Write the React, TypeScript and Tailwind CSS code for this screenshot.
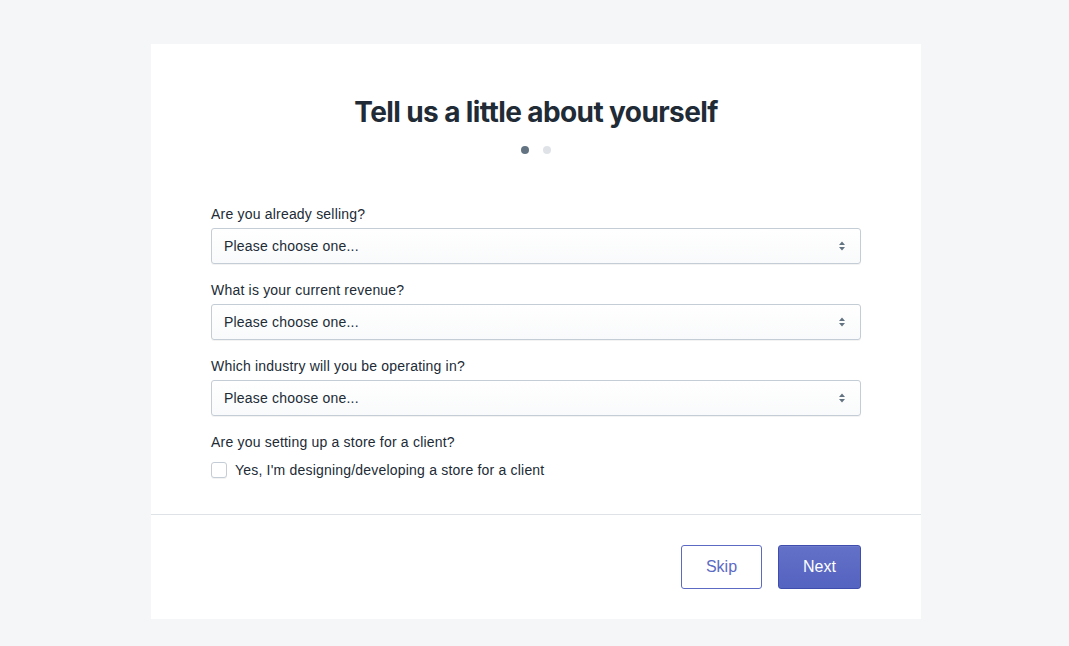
import React, { useState } from 'react';

const questions = [
  'Are you already selling?',
  'What is your current revenue?',
  'Which industry will you be operating in?',
];

const SelectArrows = () => (
  <svg width="8" height="12" viewBox="0 0 8 12" className="text-[#637381]">
    <path d="M4 1.5 L7 5 H1 Z" fill="currentColor" />
    <path d="M4 10.5 L7 7 H1 Z" fill="currentColor" />
  </svg>
);

export default function App() {
  const [client, setClient] = useState(false);

  return (
    <div className="min-h-screen bg-[#f4f6f8] pt-[44px] pb-[28px] pl-[3px] font-['Liberation_Sans',Arial,sans-serif] text-[#212b36]">
      <div className="mx-auto w-[770px] bg-white">
        {/* Body */}
        <div className="px-[60px] pt-[52px] pb-[34px]">
          <h1 className="text-center text-[28px] leading-[32px] font-bold tracking-[-0.6px] font-['Inter',sans-serif]">
            Tell us a little about yourself
          </h1>
          <div className="mt-[18px] flex justify-center gap-[14px]">
            <span className="h-2 w-2 rounded-full bg-[#637381]"></span>
            <span className="h-2 w-2 rounded-full bg-[#dfe3e8]"></span>
          </div>

          <div className="mt-[50px] tracking-[0.2px]">
            {questions.map((q) => (
              <div key={q} className="mb-4">
                <label className="block text-sm leading-5">{q}</label>
                <div className="mt-1 flex h-9 items-center justify-between rounded-[3px] border border-[#c4cdd5] bg-gradient-to-b from-white to-[#f9fafb] pl-3 pr-[14px] text-sm shadow-[0_1px_0_0_rgba(22,29,37,0.05)]">
                  <span>Please choose one...</span>
                  <SelectArrows />
                </div>
              </div>
            ))}

            <label className="block text-sm leading-5">Are you setting up a store for a client?</label>
            <label className="mt-2 flex items-center gap-2 text-sm leading-5 cursor-pointer">
              <span
                onClick={() => setClient(!client)}
                className="h-4 w-4 rounded-[3px] border border-[#c4cdd5] bg-white shadow-[0_1px_0_0_rgba(22,29,37,0.05)]"
              ></span>
              <span>Yes, I'm designing/developing a store for a client</span>
            </label>
          </div>
        </div>

        {/* Footer */}
        <div className="flex justify-end gap-4 border-t border-[#dfe3e8] px-[60px] pt-[30px] pb-[30px]">
          <button className="h-11 w-[81px] rounded-[3px] border border-[#5c6ac4] bg-white text-base text-[#5c6ac4]">
            Skip
          </button>
          <button className="h-11 w-[83px] rounded-[3px] border border-[#3f4eae] bg-gradient-to-b from-[#6371c7] to-[#5563c1] text-base text-white shadow-[inset_0_1px_0_0_#6f7bcb]">
            Next
          </button>
        </div>
      </div>
    </div>
  );
}
